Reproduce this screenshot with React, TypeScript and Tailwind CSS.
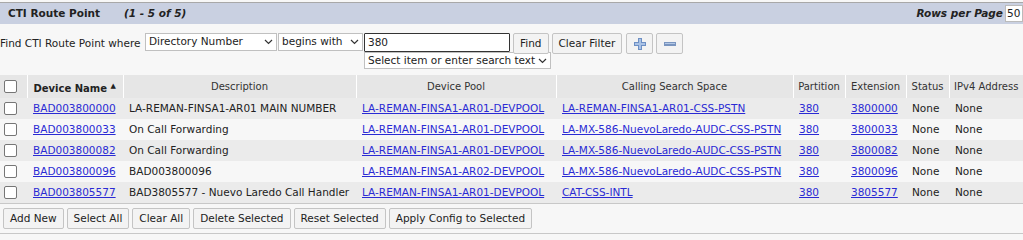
import React from 'react';

const rows = [
  { name: 'BAD003800000', desc: 'LA-REMAN-FINSA1-AR01 MAIN NUMBER', pool: 'LA-REMAN-FINSA1-AR01-DEVPOOL', css: 'LA-REMAN-FINSA1-AR01-CSS-PSTN', ext: '3800000' },
  { name: 'BAD003800033', desc: 'On Call Forwarding', pool: 'LA-REMAN-FINSA1-AR01-DEVPOOL', css: 'LA-MX-586-NuevoLaredo-AUDC-CSS-PSTN', ext: '3800033' },
  { name: 'BAD003800082', desc: 'On Call Forwarding', pool: 'LA-REMAN-FINSA1-AR01-DEVPOOL', css: 'LA-MX-586-NuevoLaredo-AUDC-CSS-PSTN', ext: '3800082' },
  { name: 'BAD003800096', desc: 'BAD003800096', pool: 'LA-REMAN-FINSA1-AR02-DEVPOOL', css: 'LA-MX-586-NuevoLaredo-AUDC-CSS-PSTN', ext: '3800096' },
  { name: 'BAD003805577', desc: 'BAD3805577 - Nuevo Laredo Call Handler', pool: 'LA-REMAN-FINSA1-AR01-DEVPOOL', css: 'CAT-CSS-INTL', ext: '3805577' },
];

const Check = () => (
  <span className="inline-block w-[13px] h-[13px] border border-[#767676] rounded-[2px] bg-white align-middle" />
);

const Chevron = () => (
  <svg width="9" height="6" viewBox="0 0 9 6" className="shrink-0">
    <path d="M1 1l3.5 3.5L8 1" fill="none" stroke="#333" strokeWidth="1.2" />
  </svg>
);

const Btn = ({ children }: { children: React.ReactNode }) => (
  <button className="h-[21px] px-[6px] border border-[#c4c4c4] rounded-[2px] bg-[#f3f3f3] text-[#222] leading-none whitespace-nowrap">
    {children}
  </button>
);

export default function App() {
  const cell = 'px-[6px] whitespace-nowrap overflow-hidden';
  const link = 'text-[#2a2ad4] underline';
  const th = 'border-r border-white font-normal text-[10px] whitespace-nowrap';
  return (
    <div className="w-[1023px] h-[240px] bg-[#f7f7f7] text-[10.5px] text-[#222] font-['DejaVu_Sans',sans-serif] overflow-hidden">
      <div className="h-[3px] bg-[#f7f7f7] border-b border-[#a8a8a8]" />
      {/* title bar */}
      <div className="h-[21px] bg-[#c9d0e1] flex items-center pl-[8px] font-bold">
        <span>CTI Route Point</span>
        <span className="ml-[24px] italic">(1 - 5 of 5)</span>
        <span className="ml-auto italic">Rows per Page</span>
        <span className="ml-[2px] h-[17px] w-[18px] bg-white border border-[#bbb] font-normal not-italic pl-[1px] leading-[15px]">50</span>
      </div>
      {/* find row */}
      <div className="flex items-start pt-[9px] h-[51px] whitespace-nowrap">
        <span className="mt-[3px] w-[145px]">Find CTI Route Point where</span>
        <div className="flex h-[18px] w-[132px] items-center justify-between border border-[#c0c0c0] bg-white px-[3px] mr-[1px]">
          <span>Directory Number</span>
          <Chevron />
        </div>
        <div className="flex h-[18px] w-[85px] items-center justify-between border border-[#c0c0c0] bg-white px-[3px] mr-[1px]">
          <span>begins with</span>
          <Chevron />
        </div>
        <div className="flex flex-col w-[146px]">
          <div className="h-[19px] w-[146px] border border-[#333] rounded-[1px] bg-white pl-[3px] leading-[17px]">380</div>
          <div className="flex h-[17px] w-[187px] shrink-0 items-center justify-between border border-[#c0c0c0] bg-white px-[3px]">
            <span>Select item or enter search text</span>
            <Chevron />
          </div>
        </div>
        <div className="flex gap-[3px] ml-[3px]">
          <Btn>Find</Btn>
          <Btn>Clear Filter</Btn>
          <button className="h-[21px] w-[27px] ml-[1px] border border-[#c4c4c4] rounded-[2px] bg-[#f3f3f3] flex items-center justify-center">
            <svg width="12" height="12" viewBox="0 0 12 12">
              <path d="M4 0h4v4h4v4H8v4H4V8H0V4h4z" fill="#6d8fc4" />
              <path d="M5 1h2v4h4v2H7v4H5V7H1V5h4z" fill="#a9c2e6" />
            </svg>
          </button>
          <button className="h-[21px] w-[27px] border border-[#c4c4c4] rounded-[2px] bg-[#f3f3f3] flex items-center justify-center">
            <svg width="12" height="4" viewBox="0 0 12 4">
              <rect width="12" height="4" fill="#7a95bf" />
              <rect x="1" y="1" width="10" height="1" fill="#b4c8e6" />
            </svg>
          </button>
        </div>
      </div>
      {/* table */}
      <table className="table-fixed border-collapse w-[1023px]">
        <colgroup>
          <col className="w-[27px]" />
          <col className="w-[96px]" />
          <col className="w-[233px]" />
          <col className="w-[200px]" />
          <col className="w-[237px]" />
          <col className="w-[52px]" />
          <col className="w-[61px]" />
          <col className="w-[43px]" />
          <col className="w-[74px]" />
        </colgroup>
        <thead>
          <tr className="h-[23px] bg-[#e6e6e6] text-[#333]">
            <th className="border-r border-white pl-[4px] text-left font-normal"><Check /></th>
            <th className="border-r border-white pl-[6px] text-left font-bold pt-[4px] whitespace-nowrap text-[10px] text-[#222]">
              Device Name <span className="text-[7px] align-top">▲</span>
            </th>
            <th className={th}>Description</th>
            <th className={th}>Device Pool</th>
            <th className={th}>Calling Search Space</th>
            <th className={th}>Partition</th>
            <th className={th}>Extension</th>
            <th className={th}>Status</th>
            <th className="font-normal text-[10px] whitespace-nowrap">IPv4 Address</th>
          </tr>
        </thead>
        <tbody>
          {rows.map((r, i) => (
            <tr key={r.name} className={i % 2 === 0 ? 'h-[21px] bg-[#ebebeb]' : 'h-[21px] bg-[#f7f7f7]'}>
              <td className="pl-[4px]"><Check /></td>
              <td className={cell}><span className={link}>{r.name}</span></td>
              <td className={cell}>{r.desc}</td>
              <td className={cell}><span className={link}>{r.pool}</span></td>
              <td className={cell}><span className={link}>{r.css}</span></td>
              <td className={cell}><span className={link}>380</span></td>
              <td className={cell}><span className={link}>{r.ext}</span></td>
              <td className={cell}>None</td>
              <td className={cell}>None</td>
            </tr>
          ))}
        </tbody>
      </table>
      <div className="border-t border-[#c8c8c8] flex gap-[3px] pl-[3px] pt-[4px] h-[30px]">
        <Btn>Add New</Btn>
        <Btn>Select All</Btn>
        <Btn>Clear All</Btn>
        <Btn>Delete Selected</Btn>
        <Btn>Reset Selected</Btn>
        <Btn>Apply Config to Selected</Btn>
      </div>
      <div className="border-t border-[#c8c8c8]" />
    </div>
  );
}
